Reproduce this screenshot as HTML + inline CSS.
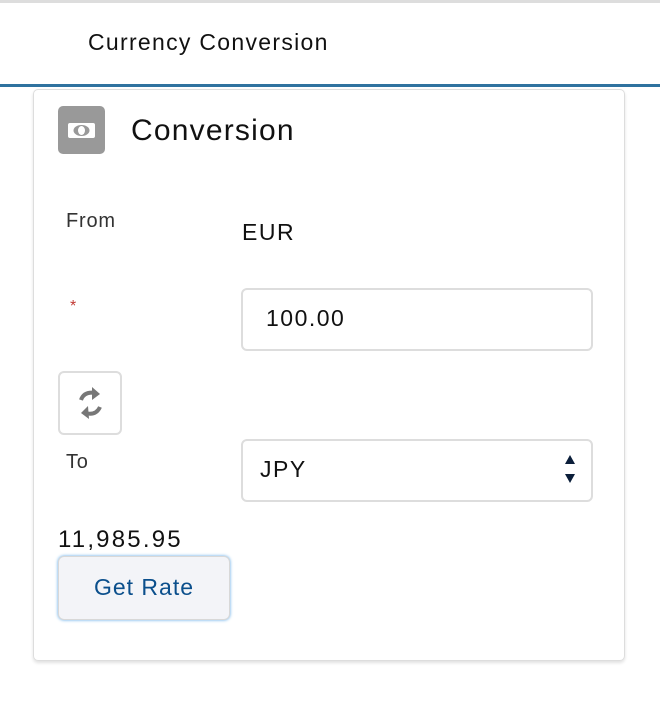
<!DOCTYPE html>
<html><head><style>
body{margin:0;width:660px;height:714px;background:#fff;font-family:"Liberation Sans",sans-serif;position:relative;overflow:hidden}
.a{position:absolute}
</style></head><body>
<div class="a" style="left:0;top:0;width:660px;height:3px;background:#ddd"></div>
<div class="a" style="left:88px;top:29px;font-size:23px;letter-spacing:1.3px;color:#111">Currency Conversion</div>
<div class="a" style="left:0;top:84px;width:660px;height:3px;background:#2f729f"></div>
<div class="a" style="left:33px;top:89px;width:590px;height:570px;border:1px solid #ddd;border-radius:5px;box-shadow:0 2px 3px rgba(0,0,0,.12)"></div>
<div class="a" style="left:58px;top:106px;width:47px;height:48px;background:#999;border-radius:5px">
<svg width="47" height="48" viewBox="0 0 47 48"><rect x="10" y="17" width="27" height="15" rx="2" fill="#fff"/><ellipse cx="23.5" cy="24.5" rx="8" ry="5.5" fill="#999"/><ellipse cx="23.5" cy="24.5" rx="3.5" ry="4.5" fill="#fff"/></svg></div>
<div class="a" style="left:131px;top:114px;font-size:30px;letter-spacing:1.2px;color:#111">Conversion</div>
<div class="a" style="left:66px;top:210px;font-size:20px;letter-spacing:0.8px;color:#333">From</div>
<div class="a" style="left:242px;top:219px;font-size:23px;letter-spacing:1.5px;color:#111">EUR</div>
<div class="a" style="left:70px;top:298px;font-size:16px;color:#c23934">*</div>
<div class="a" style="left:241px;top:288px;width:348px;height:59px;border:2px solid #ddd;border-radius:6px;box-sizing:content-box"></div>
<div class="a" style="left:266px;top:305px;font-size:23px;letter-spacing:1.5px;color:#111">100.00</div>
<div class="a" style="left:58px;top:371px;width:60px;height:60px;border:2px solid #ddd;border-radius:6px">
<svg width="60" height="60" viewBox="0 0 60 60" fill="none" stroke="#777" stroke-width="4"><path d="M21 27 Q24 18 36 20"/><path d="M32 14 L40 21 L32 27" fill="#777" stroke="none"/><path d="M40 34 Q36 43 25 40"/><path d="M29 46 L21 40 L28 33" fill="#777" stroke="none"/></svg></div>
<div class="a" style="left:66px;top:451px;font-size:20px;letter-spacing:0.8px;color:#333">To</div>
<div class="a" style="left:241px;top:439px;width:348px;height:59px;border:2px solid #ddd;border-radius:6px"></div>
<div class="a" style="left:260px;top:456px;font-size:23px;letter-spacing:1.5px;color:#111">JPY</div>
<svg class="a" style="left:563px;top:453px" width="14" height="34" viewBox="0 0 14 34"><path d="M2 11 L7 2 L12 11Z M2 21 L7 30 L12 21Z" fill="#0b1e3a"/></svg>
<div class="a" style="left:58px;top:526px;font-size:24px;letter-spacing:2.2px;color:#111">11,985.95</div>
<div class="a" style="left:58px;top:556px;width:170px;height:62px;border:1px solid #d8d8d8;border-radius:6px;background:#f3f4f8;box-shadow:0 0 3px #5aa6e6;text-align:center;line-height:60px;font-size:23px;letter-spacing:1px;color:#0b4f8c">Get Rate</div>
</body></html>
